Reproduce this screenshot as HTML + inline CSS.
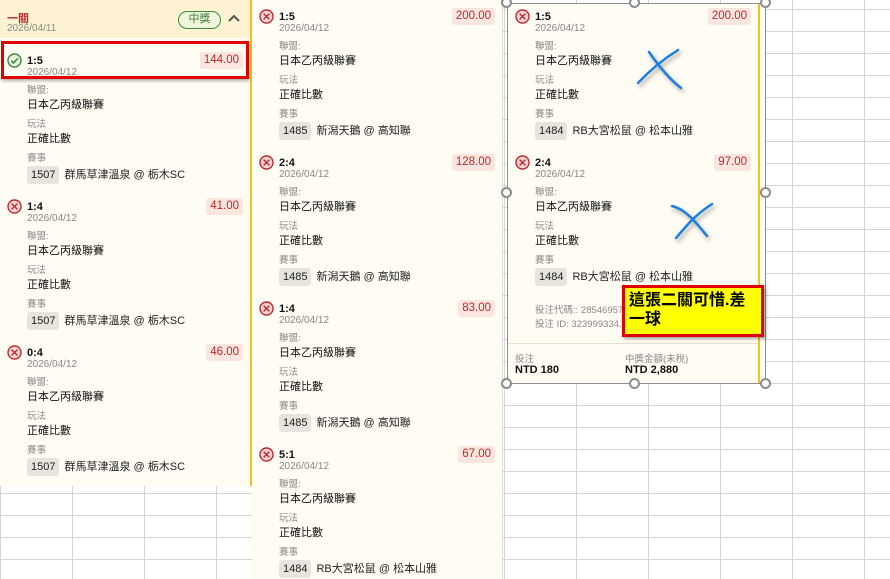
<!DOCTYPE html>
<html><head><meta charset="utf-8">
<style>
*{margin:0;padding:0;box-sizing:border-box}
body{width:890px;height:579px;overflow:hidden;position:relative;background:#fff;font-family:"Liberation Sans","Noto Sans CJK TC",sans-serif;color:#222}
.grid{position:absolute;left:0;top:0;width:890px;height:579px;
background-image:linear-gradient(to right,#d4d4d4 1px,transparent 1px),linear-gradient(to bottom,#d4d4d4 1px,transparent 1px);
background-size:72px 22px;background-position:0 0,0 9px}
.panel{position:absolute;background:#fffcf3}
.it{position:absolute;width:236px;height:130px}
.it div{position:absolute;white-space:nowrap;line-height:14px}
.t{font-weight:bold;font-size:11px;left:20px;top:0;color:#111}
.d{font-size:10px;color:#888;left:20px;top:12px}
.l{font-size:9.5px;color:#888;left:20px}
.v{font-size:11px;color:#111;left:20px}
.p{left:20px;top:112px;height:18px!important;line-height:18px!important;font-size:11px}
.p span{display:inline-block;background:#e6e4dd;border-radius:3px;padding:0 4px;margin-right:5px;color:#222}
.ic{left:0;top:-1px;width:15px;height:15px}
.amt{right:0;top:-2px;background:#fae6de;color:#c0282a;font-size:11.5px;padding:0 4px;line-height:17px!important;border-radius:3px}
.h{position:absolute;width:11px;height:11px;border:2px solid #8c8c8c;border-radius:50%;background:#fff}
</style></head><body>
<div class="grid"></div>

<div class="panel" style="left:0;top:0;width:252px;height:486px;border-right:2px solid #f2c21b"></div>
<div style="position:absolute;left:0;top:0;width:250px;height:38px;background:#fdf3d2"></div>
<div style="position:absolute;left:7px;top:10px;font-size:11px;font-weight:bold;color:#c0282a">一關</div>
<div style="position:absolute;left:7px;top:23px;font-size:10px;color:#888">2026/04/11</div>
<div style="position:absolute;left:178px;top:11px;width:43px;height:18px;border:1.5px solid #3d8a3d;border-radius:10px;background:#eef5dc;color:#3d7a3d;font-size:11px;text-align:center;line-height:15px">中獎</div>
<svg style="position:absolute;left:227px;top:13px" width="14" height="10"><path d="M2 8 L7 3 L12 8" stroke="#555" stroke-width="2" fill="none"/></svg>

<div class="it" style="left:7px;top:54px">
<svg class="ic" viewBox="0 0 15 15" style="position:absolute;left:0;top:-1px"><circle cx="7.5" cy="7.5" r="6.5" fill="#e9f3e0" stroke="#3d8a3d" stroke-width="1.4"/><path d="M4.3 7.7 L6.6 10 L10.8 5.3" stroke="#3d8a3d" stroke-width="1.5" fill="none"/></svg>
<div class="t">1:5</div><div class="d">2026/04/12</div><div class="amt">144.00</div>
<div class="l" style="top:30px">聯盟:</div><div class="v" style="top:44px">日本乙丙級聯賽</div>
<div class="l" style="top:64px">玩法</div><div class="v" style="top:78px">正確比數</div>
<div class="l" style="top:98px">賽事</div><div class="p"><span>1507</span>群馬草津溫泉 @ 栃木SC</div>
</div>
<div style="position:absolute;left:1px;top:41px;width:248px;height:38px;border:3px solid #e00000;box-shadow:1px 2px 3px rgba(0,0,0,.3)"></div>

<div id="tpl"></div>
<script>
function item(x,y,score,amt,id,match){
return '<div class="it" style="left:'+x+'px;top:'+y+'px">'+
'<svg class="ic" viewBox="0 0 15 15" style="position:absolute;left:0;top:-1px"><circle cx="7.5" cy="7.5" r="6.5" fill="#f6d6d6" stroke="#c0282a" stroke-width="1.4"/><path d="M4.6 4.6 L10.4 10.4 M10.4 4.6 L4.6 10.4" stroke="#c0282a" stroke-width="1.4"/></svg>'+
'<div class="t">'+score+'</div><div class="d">2026/04/12</div><div class="amt">'+amt+'</div>'+
'<div class="l" style="top:30px">聯盟:</div><div class="v" style="top:44px">日本乙丙級聯賽</div>'+
'<div class="l" style="top:64px">玩法</div><div class="v" style="top:78px">正確比數</div>'+
'<div class="l" style="top:98px">賽事</div><div class="p"><span>'+id+'</span>'+match+'</div></div>';}
var h='';
h+='<div class="panel" style="left:252px;top:0;width:251px;height:579px;border-right:1px solid #ddd"></div>';
h+='<div class="panel" style="left:507px;top:3px;width:259px;height:381px;border:1px solid #8c8c8c"></div>';
h+='<div style="position:absolute;left:758px;top:4px;width:2px;height:379px;background:#f2c21b"></div>';
var gm='群馬草津溫泉 @ 栃木SC',nj='新潟天鵝 @ 高知聯',rb='RB大宮松鼠 @ 松本山雅';
h+=item(7,200,'1:4','41.00','1507',gm);
h+=item(7,346,'0:4','46.00','1507',gm);
h+=item(259,10,'1:5','200.00','1485',nj);
h+=item(259,156,'2:4','128.00','1485',nj);
h+=item(259,302,'1:4','83.00','1485',nj);
h+=item(259,448,'5:1','67.00','1484',rb);
h+=item(515,10,'1:5','200.00','1484',rb);
h+=item(515,156,'2:4','97.00','1484',rb);
document.getElementById('tpl').outerHTML=h;
</script>

<div style="position:absolute;left:535px;top:304px;font-size:9.5px;color:#888;line-height:14px">投注代碼:: 285469575<br>投注 ID: 323999334.1</div>
<div style="position:absolute;left:508px;top:343px;width:250px;border-top:1px solid #e6e0cc"></div>
<div style="position:absolute;left:515px;top:351px;font-size:9.5px;color:#888">投注</div>
<div style="position:absolute;left:515px;top:364px;font-size:11px;font-weight:bold;color:#111">NTD 180</div>
<div style="position:absolute;left:625px;top:351px;font-size:9.5px;color:#888">中獎金額(未稅)</div>
<div style="position:absolute;left:625px;top:364px;font-size:11px;font-weight:bold;color:#111">NTD 2,880</div>

<div style="position:absolute;left:622px;top:285px;width:142px;height:52px;background:#ffff00;border:3px solid #e00000;box-shadow:2px 2px 3px rgba(0,0,0,.35);font-size:16px;font-weight:bold;line-height:19px;padding:3px 0 0 4px;color:#000;white-space:nowrap">這張二關可惜.差<br>一球</div>

<svg style="position:absolute;left:630px;top:40px;filter:drop-shadow(2px 3px 2px rgba(0,0,0,.35))" width="70" height="60"><path d="M8 43 C20 30 32 20 48 10" stroke="#1a7fe0" stroke-width="2.5" fill="none" stroke-linecap="round"/><path d="M19 12 C28 25 38 38 51 48" stroke="#1a7fe0" stroke-width="2.5" fill="none" stroke-linecap="round"/></svg>
<svg style="position:absolute;left:665px;top:195px;filter:drop-shadow(2px 3px 2px rgba(0,0,0,.35))" width="60" height="55"><path d="M11 43 C22 30 30 20 47 9" stroke="#1a7fe0" stroke-width="2.5" fill="none" stroke-linecap="round"/><path d="M7 11 C20 14 30 26 42 41" stroke="#1a7fe0" stroke-width="2.5" fill="none" stroke-linecap="round"/></svg>

<div class="h" style="left:501px;top:-3px"></div>
<div class="h" style="left:629px;top:-3px"></div>
<div class="h" style="left:760px;top:-3px"></div>
<div class="h" style="left:501px;top:187px"></div>
<div class="h" style="left:760px;top:187px"></div>
<div class="h" style="left:501px;top:378px"></div>
<div class="h" style="left:629px;top:378px"></div>
<div class="h" style="left:760px;top:378px"></div>
</body></html>
